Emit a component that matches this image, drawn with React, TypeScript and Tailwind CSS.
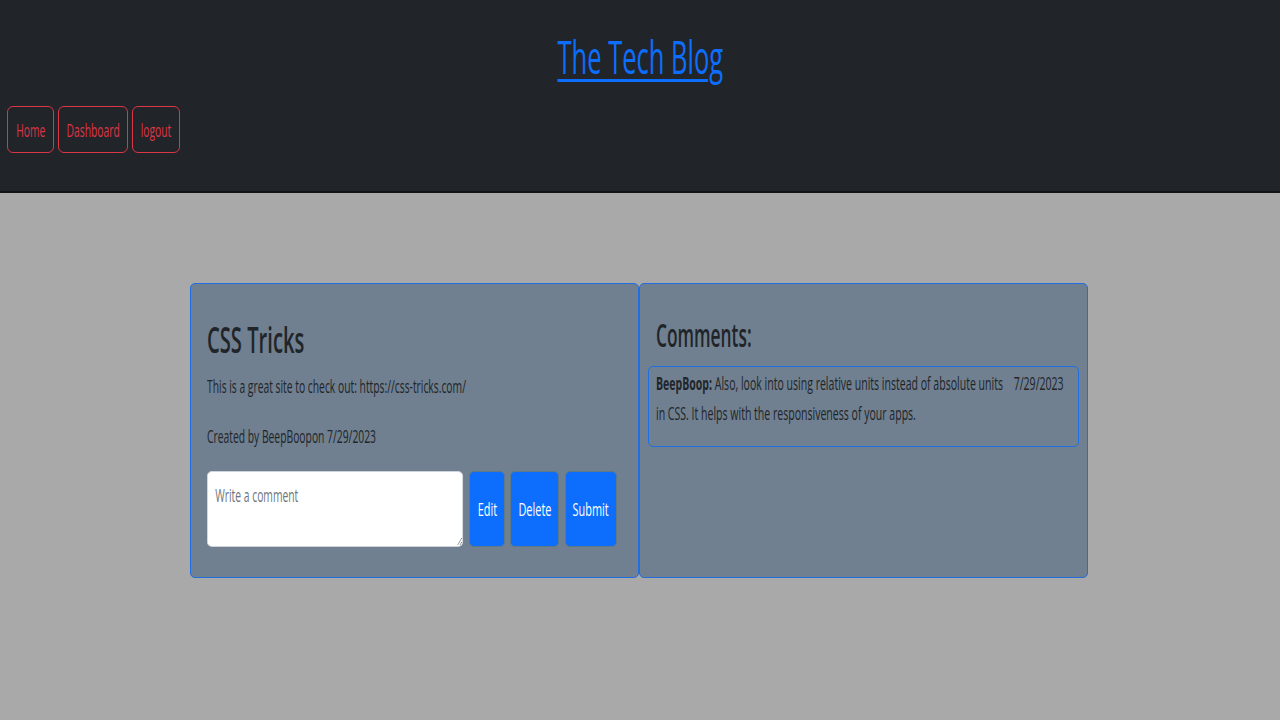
import React from "react";

function NavBtn({ label, w }: { label: string; w: string }) {
  return (
    <a
      href="#"
      className={`${w} h-[47px] shrink-0 flex items-center justify-center rounded-[6px] border border-[#dc3545] text-[#dc3545]`}
    >
      <span className="inline-block whitespace-nowrap origin-center scale-x-[0.59] text-[17.5px] leading-[24px]">
        {label}
      </span>
    </a>
  );
}

function BlueBtn({ label, w }: { label: string; w: string }) {
  return (
    <button
      type="button"
      className={`${w} h-[76px] shrink-0 flex items-center justify-center rounded-[5px] border border-[#5d7a86] bg-[#0d6efd] text-white`}
    >
      <span className="inline-block whitespace-nowrap origin-center scale-x-[0.59] text-[18.5px] leading-[24px]">
        {label}
      </span>
    </button>
  );
}

export default function App() {
  return (
    <div className="min-h-screen bg-[#a9a9a9] font-['Open_Sans',sans-serif] text-[#212529]">
      <header className="bg-[#212529] border-b-2 border-[#111417] pt-[28px] pb-[38px]">
        <h1 className="text-center text-[46px] leading-[56px] font-medium">
          <a
            href="#"
            className="inline-block whitespace-nowrap origin-center scale-x-[0.555] text-[#0d6efd] underline decoration-[3px] underline-offset-[5px]"
          >
            The Tech Blog
          </a>
        </h1>
        <nav className="mt-[22px] flex gap-[4px] pl-[7px]">
          <NavBtn label="Home" w="w-[47px]" />
          <NavBtn label="Dashboard" w="w-[70px]" />
          <NavBtn label="logout" w="w-[48px]" />
        </nav>
      </header>

      <main className="flex pt-[90px] pl-[190px]">
        <section className="w-[449px] shrink-0 rounded-[5px] border border-[#1f6fe0] bg-[#708090] px-4 pt-[34px] pb-[30px]">
          <h2 className="text-[36px] leading-[43px] font-semibold">
            <span className="inline-block whitespace-nowrap origin-left scale-x-[0.56]">CSS Tricks</span>
          </h2>
          <p className="mt-[12px] text-[17.5px] leading-[26px]">
            <span className="inline-block whitespace-nowrap origin-left scale-x-[0.59]">
              This is a great site to check out: https://css-tricks.com/
            </span>
          </p>
          <p className="mt-[24px] text-[17.5px] leading-[26px]">
            <span className="inline-block whitespace-nowrap origin-left scale-x-[0.59]">
              Created by BeepBoopon 7/29/2023
            </span>
          </p>
          <form className="mt-[22px] flex h-[76px]" onSubmit={(e) => e.preventDefault()}>
            <div className="w-[256px] h-[76px] shrink-0">
              <textarea
                placeholder="Write a comment"
                className="block w-[434px] h-[76px] origin-left scale-x-[0.59] rounded-[9px/5px] border border-[#ced4da] bg-white pl-[13px] pt-[10px] text-[17.5px] leading-[26px] text-[#212529] placeholder:text-[#6c757d] outline-none"
              />
            </div>
            <div className="ml-[6px] flex gap-[5px]">
              <BlueBtn label="Edit" w="w-[36px]" />
              <BlueBtn label="Delete" w="w-[49px]" />
              <div className="ml-[1px]">
                <BlueBtn label="Submit" w="w-[52px]" />
              </div>
            </div>
          </form>
        </section>

        <section className="w-[449px] shrink-0 rounded-[5px] border border-[#1f6fe0] bg-[#708090] pt-[31px]">
          <h3 className="pl-4 text-[33px] leading-[40px] font-semibold">
            <span className="inline-block whitespace-nowrap origin-left scale-x-[0.525]">Comments:</span>
          </h3>
          <div className="mx-[8px] mt-[11px] flex rounded-[5px] border border-[#1f6fe0] pl-[7px] pr-[14px] pt-[1px] pb-[18px]">
            <div className="w-[352px] shrink-0 overflow-hidden">
              <p className="w-[618px] origin-left scale-x-[0.57] text-[18.5px] leading-[30px]">
                <strong className="font-bold">BeepBoop:</strong> Also, look into using relative units instead of
                absolute units in CSS. It helps with the responsiveness of your apps.
              </p>
            </div>
            <div className="ml-auto w-[49px] shrink-0 flex justify-end">
              <span className="inline-block whitespace-nowrap origin-right scale-x-[0.57] text-[18.5px] leading-[30px]">
                7/29/2023
              </span>
            </div>
          </div>
        </section>
      </main>
    </div>
  );
}
